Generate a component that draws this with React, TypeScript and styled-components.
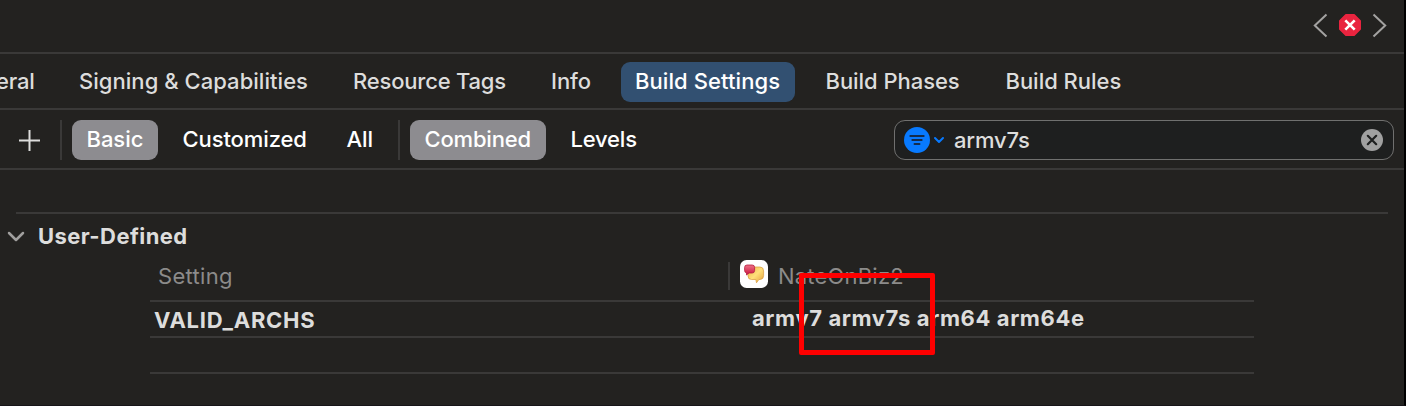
import React from "react";
import styled, { createGlobalStyle } from "styled-components";

const Global = createGlobalStyle`
  * { box-sizing: border-box; }
  body { margin: 0; background: #232220; overflow: hidden; }
`;

const line = "#3a3938";

const Editor = styled.main`
  position: relative;
  width: 1406px;
  height: 406px;
  overflow: hidden;
  background: #232220;
  border-right: 2px solid #000;
  border-bottom: 1px solid #171519;
  color: #dddddc;
  font: 400 22px/28px Inter, "Liberation Sans", sans-serif;
  white-space: nowrap;
`;

const JumpBar = styled.header`
  display: flex;
  align-items: center;
  justify-content: flex-end;
  height: 54px;
  padding: 0 16px 2px 0;
  border-bottom: 2px solid ${line};
  svg { display: block; }
`;

const TabBar = styled.nav`
  display: flex;
  align-items: center;
  height: 56px;
  padding-top: 2px;
  border-bottom: 2px solid ${line};
`;

type LabelProps = { $w: number; $ls?: number; $gap?: number };

const Tab = styled.div<LabelProps & { $active?: boolean }>`
  flex: none;
  width: ${(p) => p.$w}px;
  height: 40px;
  margin-left: ${(p) => p.$gap ?? 0}px;
  padding-left: 14px;
  border-radius: 9px;
  line-height: 38px;
  letter-spacing: ${(p) => p.$ls ?? 0}px;
  font-weight: ${(p) => (p.$active ? 500 : 450)};
  color: ${(p) => (p.$active ? "#fff" : "#dddddc")};
  background: ${(p) => (p.$active ? "#325071" : "transparent")};
`;

const FilterBar = styled.div`
  display: flex;
  align-items: center;
  height: 60px;
  padding: 2px 10px 0 18px;
  border-bottom: 2px solid ${line};
`;

const Scope = styled.button<LabelProps & { $active?: boolean }>`
  display: flex;
  flex: none;
  width: ${(p) => p.$w}px;
  height: 40px;
  margin: 0 0 0 ${(p) => p.$gap ?? 0}px;
  padding: 0 0 0 14.5px;
  border: 0;
  border-radius: 9px;
  text-align: left;
  font: 500 22px/38px Inter, "Liberation Sans", sans-serif;
  letter-spacing: ${(p) => p.$ls ?? 0}px;
  color: #fff;
  background: ${(p) => (p.$active ? "#8d8c90" : "transparent")};
`;

const Divider = styled.div<{ $gap: number; $h?: number; $top?: number }>`
  flex: none;
  width: 2px;
  height: ${(p) => p.$h ?? 40}px;
  margin-top: ${(p) => p.$top ?? 0}px;
  margin-left: ${(p) => p.$gap}px;
  background: ${line};
`;

const Search = styled.div`
  display: flex;
  align-items: center;
  width: 500px;
  height: 40px;
  margin-left: auto;
  padding: 0 10px 0 9px;
  border: 1px solid #70706f;
  border-radius: 11px;
  background: #1e1f1f;
  svg { flex: none; }
`;

const Query = styled.span`
  flex: 1;
  margin-left: 8px;
  font-weight: 450;
  letter-spacing: -0.15px;
`;

const Section = styled.section`
  margin: 42px 16px 0;
  border-top: 2px solid ${line};
`;

const SectionHead = styled.div`
  display: flex;
  align-items: center;
  height: 44px;
  margin-left: -9px;
`;

const SectionTitle = styled.h2`
  margin: 0 0 0 13px;
  font: inherit;
  font-weight: 700;
  letter-spacing: 0.42px;
`;

const Table = styled.div`
  width: 1104px;
  margin-left: 134px;
`;

const HeadRow = styled.div`
  display: flex;
  height: 42px;
  color: #8c8b8a;
`;

const SettingName = styled.div`
  width: 578px;
  padding: 4px 0 0 8px;
  letter-spacing: 0.3px;
`;

const Target = styled.div`
  display: flex;
  margin-left: 10px;
  gap: 10px;
  svg { margin-top: 2px; }
`;

const TargetName = styled.span`
  padding-top: 4px;
  letter-spacing: 0.2px;
`;

const Row = styled.div`
  display: flex;
  height: 36px;
  border-top: 2px solid ${line};
  color: #dddddc;
  font-weight: 700;
`;

const Key = styled.div`
  width: 602px;
  padding: 4px 0 0 4px;
  letter-spacing: 0.75px;
`;

const Value = styled.div`
  padding-top: 2px;
  letter-spacing: 0.6px;
`;

const Highlight = styled.div`
  position: absolute;
  left: 799px;
  top: 273px;
  width: 136px;
  height: 82px;
  border: 5px solid #fe0000;
  border-radius: 2px;
`;

const IssueNav = () => (
  <svg width="76" height="28" viewBox="1312 11 76 28" fill="none">
    <path d="M1326.5 14.5 1314.8 25.5l11.7 11M1373.5 14.5l11.7 11-11.7 11" stroke="#a3a2a1" strokeWidth="2" />
    <path d="M1346 15h8l6 6v8l-6 6h-8l-6-6v-8z" fill="#e9243f" stroke="#e9243f" strokeWidth="2" strokeLinejoin="round" />
    <path d="m1345.300 20.300 9.400 9.400m0-9.400-9.400 9.400" stroke="#fff" strokeWidth="2.600" />
  </svg>
);

const AppIcon = () => (
  <svg width="28" height="28" viewBox="0 0 28 28">
    <defs>
      <linearGradient id="gold" x2="1" y2="1">
        <stop stopColor="#e9b64d" />
        <stop offset=".5" stopColor="#ffdf7a" />
        <stop offset="1" stopColor="#e4a13a" />
      </linearGradient>
      <linearGradient id="rose" x2="0" y2="1">
        <stop stopColor="#ee7187" />
        <stop offset="1" stopColor="#c9133d" />
      </linearGradient>
    </defs>
    <rect width="28" height="28" rx="6.5" fill="#fff" />
    <path d="M12 7h8q3.600 0 3.600 4v4.500q0 4-3.600 4h-1.100l-2.400 3.300-.7-3.300H11.500q-3.500 0-3.500-3.500V11q0-4 4-4z" fill="url(#gold)" stroke="#d9993a" strokeWidth=".7" />
    <path d="M7 5h5.200q2.400 0 2.400 2.400v3.200q0 2.400-2.400 2.400H9l-2.500 2v-2.100q-1.900-.3-1.900-2.300V7.400Q4.600 5 7 5z" fill="url(#rose)" stroke="#b51d40" strokeWidth=".8" />
  </svg>
);

export default function App() {
  return (
    <Editor>
      <Global />
      <JumpBar><IssueNav /></JumpBar>
      <TabBar>
        <Tab $w={62} $gap={-18} $ls={-0.2}>eral</Tab>
        <Tab $w={257} $gap={21} $ls={0.04}>Signing &amp; Capabilities</Tab>
        <Tab $w={181} $gap={17} $ls={-0.2}>Resource Tags</Tab>
        <Tab $w={67} $gap={17} $ls={-0.1}>Info</Tab>
        <Tab $w={174} $gap={17} $active $ls={0.08}>Build Settings</Tab>
        <Tab $w={161} $gap={16.5} $ls={-0.05}>Build Phases</Tab>
        <Tab $w={150} $gap={19} $ls={-0.03}>Build Rules</Tab>
      </TabBar>
      <FilterBar>
        <svg width="22" height="22" viewBox="0 0 22 22" stroke="#dddddc" strokeWidth="2">
          <path d="M1 11.500h21M11.500 1v21" />
        </svg>
        <Divider $gap={20} />
        <Scope $w={86} $gap={10} $active $ls={-0.05}>Basic</Scope>
        <Scope $w={150} $gap={10} $ls={-0.1}>Customized</Scope>
        <Scope $w={54} $gap={14} $ls={-0.1}>All</Scope>
        <Divider $gap={12} />
        <Scope $w={136} $gap={10} $active $ls={-0.18}>Combined</Scope>
        <Scope $w={94} $gap={10} $ls={-0.2}>Levels</Scope>
        <Search>
          <svg width="42" height="26" viewBox="0 0 42 26" fill="none">
            <circle cx="13" cy="13" r="13" fill="#087aff" />
            <path d="M6.300 9h13.400M8.300 13h9.400M10.500 17h5" stroke="#142c4d" strokeWidth="1.900" strokeLinecap="round" />
            <path d="m31 11 4 4 4-4" stroke="#087aff" strokeWidth="2" strokeLinecap="round" strokeLinejoin="round" />
          </svg>
          <Query>armv7s</Query>
          <svg width="22" height="22" viewBox="0 0 22 22">
            <circle cx="11" cy="11" r="11" fill="#a0a0a0" />
            <path d="m6.800 6.800 8.400 8.400m0-8.400-8.400 8.400" stroke="#1e1f1f" strokeWidth="2.200" strokeLinecap="round" />
          </svg>
        </Search>
      </FilterBar>
      <Section>
        <SectionHead>
          <svg width="18" height="12" viewBox="0 0 18 12" fill="none">
            <path d="m2 3 7 7 7-7" stroke="#a09f9e" strokeWidth="2.500" strokeLinecap="round" strokeLinejoin="round" />
          </svg>
          <SectionTitle>User-Defined</SectionTitle>
        </SectionHead>
        <Table>
          <HeadRow>
            <SettingName>Setting</SettingName>
            <Divider $gap={0} $h={28} $top={4} />
            <Target><AppIcon /><TargetName>NateOnBiz2</TargetName></Target>
          </HeadRow>
          <Row>
            <Key>VALID_ARCHS</Key>
            <Value>armv7 armv7s arm64 arm64e</Value>
          </Row>
          <Row />
          <Row />
        </Table>
      </Section>
      <Highlight />
    </Editor>
  );
}
